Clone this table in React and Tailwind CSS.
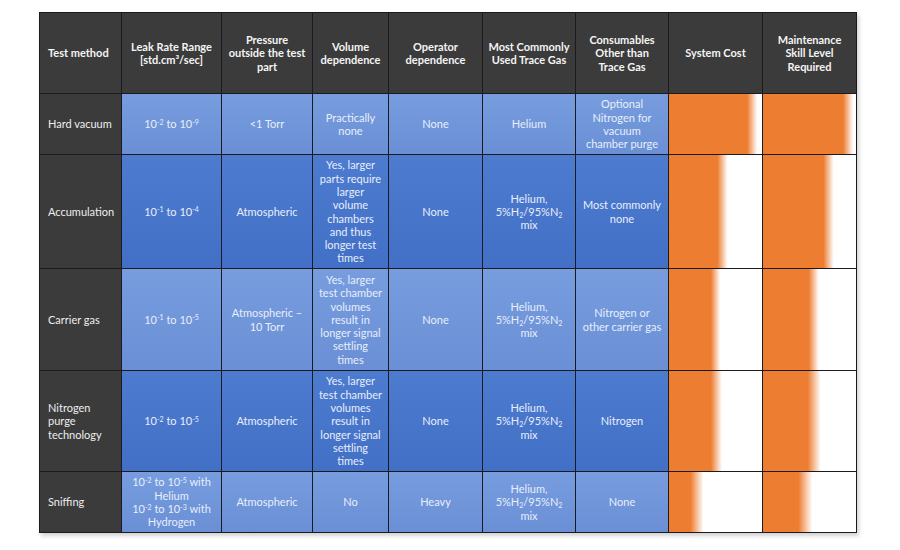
const HEADERS = [
  ['Test method'],
  ['Leak Rate Range', '[std.cm³/sec]'],
  ['Pressure', 'outside the test', 'part'],
  ['Volume', 'dependence'],
  ['Operator', 'dependence'],
  ['Most Commonly', 'Used Trace Gas'],
  ['Consumables', 'Other than', 'Trace Gas'],
  ['System Cost'],
  ['Maintenance', 'Skill Level', 'Required'],
];

function Pow({ e }) {
  return (
    <>
      10<sup className="text-[7px]">{e}</sup>
    </>
  );
}

const MIX = [
  'Helium,',
  <>5%H<sub className="text-[7px]">2</sub>/95%N<sub className="text-[7px]">2</sub></>,
  'mix',
];

const SLOW = ['Yes, larger', 'test chamber', 'volumes', 'result in', 'longer signal', 'settling', 'times'];

const ROWS = [
  {
    method: ['Hard vacuum'],
    dark: false,
    cells: [
      [<><Pow e="-2" /> to <Pow e="-9" /></>],
      ['<1 Torr'],
      ['Practically', 'none'],
      ['None'],
      ['Helium'],
      ['Optional', 'Nitrogen for', 'vacuum', 'chamber purge'],
    ],
    cost: [84, 95],
    skill: [86, 97],
  },
  {
    method: ['Accumulation'],
    dark: true,
    cells: [
      [<><Pow e="-1" /> to <Pow e="-4" /></>],
      ['Atmospheric'],
      ['Yes, larger', 'parts require', 'larger', 'volume', 'chambers', 'and thus', 'longer test', 'times'],
      ['None'],
      MIX,
      ['Most commonly', 'none'],
    ],
    cost: [52, 63],
    skill: [65, 76],
  },
  {
    method: ['Carrier gas'],
    dark: false,
    cells: [
      [<><Pow e="-1" /> to <Pow e="-5" /></>],
      ['Atmospheric –', '10 Torr'],
      SLOW,
      ['None'],
      MIX,
      ['Nitrogen or', 'other carrier gas'],
    ],
    cost: [45, 55],
    skill: [49, 60],
  },
  {
    method: ['Nitrogen', 'purge', 'technology'],
    dark: true,
    cells: [
      [<><Pow e="-2" /> to <Pow e="-5" /></>],
      ['Atmospheric'],
      SLOW,
      ['None'],
      MIX,
      ['Nitrogen'],
    ],
    cost: [45, 57],
    skill: [48, 62],
  },
  {
    method: ['Sniffing'],
    dark: false,
    cells: [
      [
        <><Pow e="-2" /> to <Pow e="-5" /> with</>,
        'Helium',
        <><Pow e="-2" /> to <Pow e="-3" /> with</>,
        'Hydrogen',
      ],
      ['Atmospheric'],
      ['No'],
      ['Heavy'],
      MIX,
      ['None'],
    ],
    cost: [23, 37],
    skill: [38, 53],
  },
];

function Lines({ lines }) {
  return lines.map((l, i) => (
    <span key={i} className="block whitespace-nowrap">
      {l}
    </span>
  ));
}

function Bar({ stops }) {
  const [solid, end] = stops;
  return (
    <div
      className="bg-white"
      style={{ background: `linear-gradient(to right, #ed7d31 ${solid}%, #ffffff ${end}%)` }}
    />
  );
}

export default function App() {
  return (
    <div className="min-h-[550px] w-[900px] bg-white pl-[39px] pt-[12px] font-['Lato','Open_Sans',sans-serif] text-[11px] leading-[13.3px]">
      <div className="grid w-fit grid-cols-[81px_99px_90px_75px_93px_92px_92px_93px_93px] grid-rows-[80px_60px_113px_101px_100px_60px] gap-px border border-[#1b1b1f] bg-[#1b1b1f] shadow-[2px_3px_4px_rgba(0,0,0,0.18)]">
        {HEADERS.map((h, i) => (
          <div
            key={i}
            className={`flex items-center bg-[#3b3b3b] font-bold text-[#f4f4f4] ${
              i === 0 ? 'pl-[8px] text-left' : 'justify-center text-center'
            }`}
          >
            <div>
              <Lines lines={h} />
            </div>
          </div>
        ))}

        {ROWS.map((r, ri) => (
          <div key={ri} className="contents">
            <div className="flex items-center bg-[#3b3b3b] pl-[8px] text-[#eeeeee]">
              <div>
                <Lines lines={r.method} />
              </div>
            </div>
            {r.cells.map((c, ci) => (
              <div
                key={ci}
                className={`flex items-center justify-center text-center text-[#e8eefb] ${
                  r.dark
                    ? 'bg-linear-to-b from-[#4d7bcf] to-[#4270c6]'
                    : 'bg-linear-to-b from-[#779ddf] to-[#6a8fd5]'
                }`}
              >
                <div>
                  <Lines lines={c} />
                </div>
              </div>
            ))}
            <Bar stops={r.cost} />
            <Bar stops={r.skill} />
          </div>
        ))}
      </div>
    </div>
  );
}
